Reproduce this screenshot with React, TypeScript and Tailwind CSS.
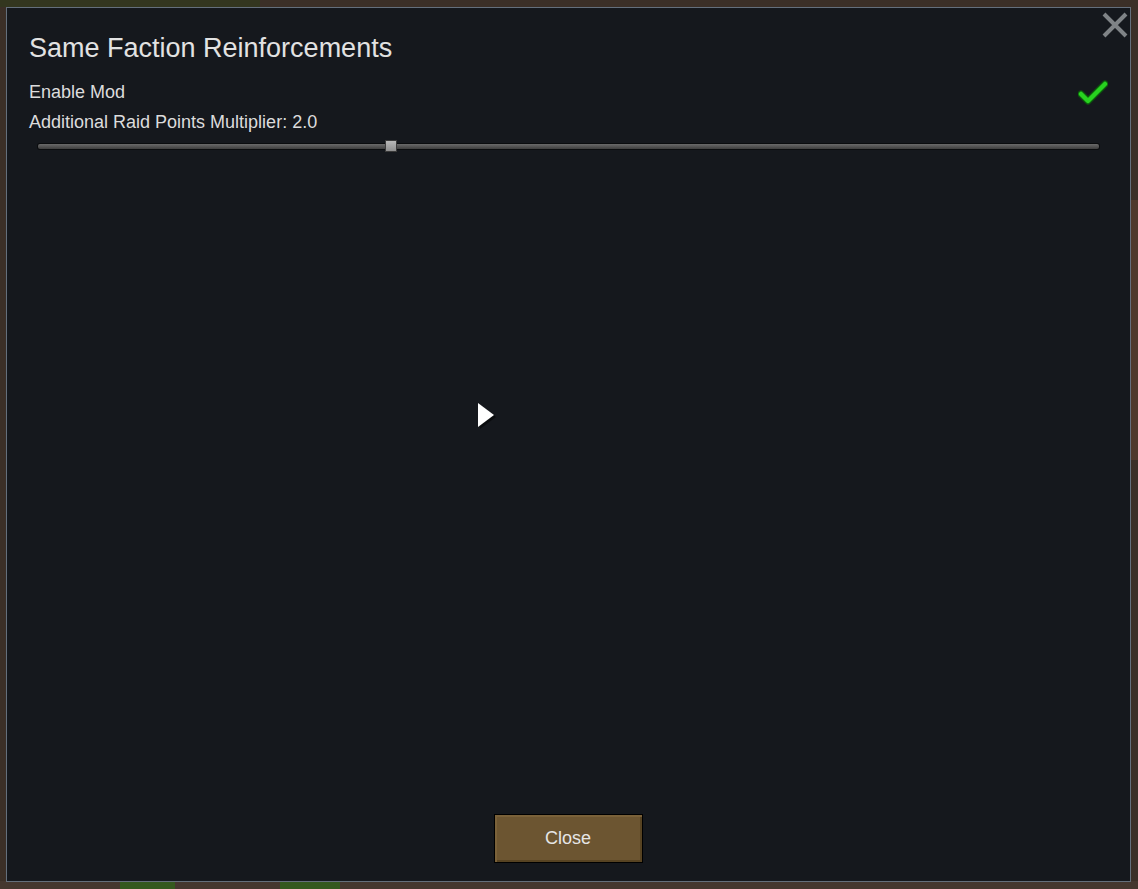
import React from "react";

const font = { fontFamily: '"Liberation Sans", Arial, sans-serif' };

function CheckMark() {
  return (
    <svg width="30" height="26" viewBox="0 0 30 26" className="block">
      <path d="M3 15 L10 22 L27 5" fill="none" stroke="#0c5a0c" strokeWidth="7" strokeLinecap="round" strokeLinejoin="round" />
      <path d="M3 15 L10 22 L27 5" fill="none" stroke="#27d21f" strokeWidth="4.5" strokeLinecap="round" strokeLinejoin="round" />
    </svg>
  );
}

function CloseX() {
  return (
    <svg width="26" height="26" viewBox="0 0 26 26" className="block">
      <path d="M2 2 L24 24 M24 2 L2 24" stroke="#7f8386" strokeWidth="4" />
    </svg>
  );
}

function Slider({ value }: { value: number }) {
  return (
    <div className="relative h-[12px] flex items-center">
      <div className="w-full h-[7px] rounded-[3px] bg-[#0a0c0e] p-[1px]">
        <div className="h-full w-full rounded-[2px] bg-gradient-to-b from-[#6a6a6a] to-[#3e3e3e]" />
      </div>
      <div
        className="absolute top-0 w-[12px] h-[12px] bg-gradient-to-b from-[#b8b8b8] to-[#8f8f8f] border border-[#3a3a3a]"
        style={{ left: `calc(${value * 100}% - 6px)` }}
      />
    </div>
  );
}

export default function App() {
  return (
    <div className="relative w-[1138px] h-[889px] overflow-hidden bg-[#3b2f27] pt-[7px] pl-[6px] pr-[7px] pb-[7px]" style={font}>
      {/* game world peeking around the window */}
      <div className="absolute left-0 top-0 w-[260px] h-[7px] bg-[#33361f]" />
      <div className="absolute left-0 bottom-0 w-full h-[8px] bg-[#45372f]" />
      <div className="absolute left-[120px] bottom-0 w-[55px] h-[8px] bg-[#35591e]" />
      <div className="absolute left-[280px] bottom-0 w-[60px] h-[8px] bg-[#35591e]" />
      <div className="absolute right-0 top-[200px] w-[8px] h-[260px] bg-[#4e3a2c]" />

      <div className="relative h-full w-full border-[1.5px] border-[#646f7c] bg-[#15181d] flex flex-col">
        <button className="absolute right-[2px] top-[4px]">
          <CloseX />
        </button>

        <div className="px-[22px] pt-[25px]">
          <h1 className="text-[27px] leading-[30px] text-[#e2e2e2]">Same Faction Reinforcements</h1>

          <div className="mt-[18px] flex items-center justify-between h-[22px]">
            <span className="text-[18px] text-[#dcdcdc]">Enable Mod</span>
            <CheckMark />
          </div>

          <div className="mt-[8px] h-[22px] flex items-center">
            <span className="text-[18px] text-[#dcdcdc]">Additional Raid Points Multiplier: 2.0</span>
          </div>

          <div className="mt-[7px] pl-[8px] pr-[8px]">
            <Slider value={0.333} />
          </div>
        </div>

        <div className="flex-1" />

        <div className="flex justify-center pb-[18px] pr-[1px]">
          <button className="w-[149px] h-[49px] border border-black bg-[#6c5531] shadow-[inset_2px_2px_0_#7a6139,inset_-2px_-2px_0_#574322] text-[18px] text-[#e6e6e6]">
            Close
          </button>
        </div>
      </div>

      {/* mouse cursor */}
      <svg className="absolute left-[476px] top-[401px]" width="22" height="30" viewBox="0 0 22 30">
        <path d="M3 3 L3 27 L19 15 Z" fill="#000" opacity="0.5" transform="translate(1,1)" />
        <path d="M2 2 L2 26 L18 14 Z" fill="#ffffff" />
      </svg>
    </div>
  );
}
